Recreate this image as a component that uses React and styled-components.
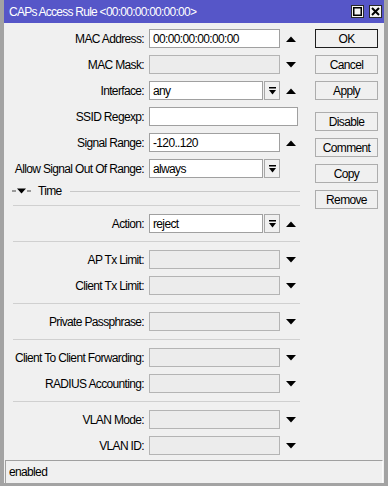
import styled, { createGlobalStyle } from 'styled-components';

const GlobalStyle = createGlobalStyle`
  html, body {
    margin: 0;
    padding: 0;
    background: #f0f0f0;
  }
  body {
    font-family: "Liberation Sans", Arial, sans-serif;
    font-size: 12px;
    letter-spacing: -0.65px;
    color: #000;
  }
`;

const Window = styled.div`
  width: 388px;
  height: 486px;
  box-sizing: border-box;
  display: flex;
  flex-direction: column;
  background: #f0f0f0;
  border-left: 4px solid #a3a3a3;
  border-right: 4px solid #a3a3a3;
  border-bottom: 3px solid #a3a3a3;
`;

const TitleBar = styled.div`
  height: 23px;
  flex-shrink: 0;
  display: flex;
  align-items: center;
  justify-content: space-between;
  padding: 0 2px 0 5px;
  background: #5656c8;
  color: #fff;
  letter-spacing: -0.75px;
`;

const TitleButtons = styled.div`
  display: flex;
  gap: 5px;
`;

const TitleButton = styled.div`
  width: 13px;
  height: 13px;
  box-sizing: border-box;
  display: flex;
  align-items: center;
  justify-content: center;
  background: #f4f4f4;
  border: 1px solid #2a2a2a;
`;

const Body = styled.div`
  display: flex;
  padding-top: 6px;
`;

const Form = styled.div`
  width: 296px;
  display: flex;
  flex-direction: column;
  gap: 7px;
`;

const Row = styled.div`
  display: flex;
  align-items: center;
  height: 19px;
`;

const Label = styled.div`
  width: 140px;
  text-align: right;
  white-space: nowrap;
  margin-right: 5px;
`;

const FieldGroup = styled.div`
  display: flex;
  width: ${(p) => (p.$wide ? '149px' : '131px')};
  height: 19px;
  gap: 1px;
`;

const Field = styled.div`
  flex: 1;
  box-sizing: border-box;
  height: 19px;
  padding: 0 3px;
  display: flex;
  align-items: center;
  background: ${(p) => (p.$disabled ? '#ececec' : '#fff')};
  border: 1px solid ${(p) => (p.$disabled ? '#b4b4b4' : '#a0a0a0')};
  white-space: nowrap;
`;

const DropButton = styled.div`
  width: 16px;
  box-sizing: border-box;
  height: 19px;
  display: flex;
  align-items: center;
  justify-content: center;
  background: #f0f0f0;
  border: 1px solid #a8a8a8;
`;

const ArrowCell = styled.div`
  width: 20px;
  display: flex;
  align-items: center;
  justify-content: center;
  padding-left: 2px;
  box-sizing: border-box;
`;

const TimeRow = styled.div`
  display: flex;
  align-items: center;
  height: 12px;
  padding-left: 8px;
  gap: 6px;
`;

const TimeLine = styled.div`
  flex: 1;
  height: 1px;
  background: #c8c8c8;
  margin-left: 2px;
`;

const Separator = styled.div`
  height: 1px;
  margin: 1px 0 1px 9px;
  background: #d0d0d0;
`;

const Buttons = styled.div`
  width: 63px;
  margin-left: 15px;
  display: flex;
  flex-direction: column;
  gap: 7px;
`;

const Button = styled.div`
  height: 19px;
  box-sizing: border-box;
  display: flex;
  align-items: center;
  justify-content: center;
  background: #f0f0f0;
  border: 1px solid ${(p) => (p.$default ? '#1e1e1e' : '#adadad')};
  margin-top: ${(p) => (p.$groupStart ? '5px' : '0')};
`;

const StatusBar = styled.div`
  margin: auto 1px 0 1px;
  height: 23px;
  box-sizing: border-box;
  display: flex;
  align-items: center;
  padding-left: 3px;
  border-top: 1px solid #a0a0a0;
  border-left: 1px solid #a0a0a0;
  border-right: 1px solid #fafafa;
`;

function UpArrow() {
  return (
    <svg width="10" height="6" viewBox="0 0 10 6">
      <polygon points="0,6 10,6 5,0.5" fill="#000" />
    </svg>
  );
}

function DownArrow() {
  return (
    <svg width="10" height="6" viewBox="0 0 10 6">
      <polygon points="0,0 10,0 5,5.5" fill="#000" />
    </svg>
  );
}

function DropIcon() {
  return (
    <svg width="7" height="8" viewBox="0 0 7 8">
      <rect x="0" y="0" width="7" height="1.5" fill="#000" />
      <polygon points="0,3 7,3 3.5,7.5" fill="#000" />
    </svg>
  );
}

function CollapseIcon() {
  return (
    <svg width="20" height="8" viewBox="0 0 20 8">
      <rect x="0" y="3.5" width="4" height="1" fill="#444" />
      <polygon points="5,1.5 14,1.5 9.5,6.5" fill="#000" />
      <rect x="15" y="3.5" width="4" height="1" fill="#444" />
    </svg>
  );
}

function FormRow({ label, value = '', disabled, drop, arrow, wide }) {
  return (
    <Row>
      <Label>{label}:</Label>
      <FieldGroup $wide={wide}>
        <Field $disabled={disabled}>{value}</Field>
        {drop && (
          <DropButton>
            <DropIcon />
          </DropButton>
        )}
      </FieldGroup>
      {!wide && (
        <ArrowCell>
          {arrow === 'up' && <UpArrow />}
          {arrow === 'down' && <DownArrow />}
        </ArrowCell>
      )}
    </Row>
  );
}

export default function App() {
  return (
    <>
      <GlobalStyle />
      <Window>
        <TitleBar>
          <span>CAPs Access Rule &lt;00:00:00:00:00:00&gt;</span>
          <TitleButtons>
            <TitleButton>
              <svg width="9" height="9" viewBox="0 0 9 9">
                <rect x="0.75" y="0.75" width="7.5" height="7.5" fill="none" stroke="#000" strokeWidth="1.5" />
              </svg>
            </TitleButton>
            <TitleButton>
              <svg width="9" height="9" viewBox="0 0 9 9">
                <path d="M1 1 L8 8 M8 1 L1 8" stroke="#000" strokeWidth="2" />
              </svg>
            </TitleButton>
          </TitleButtons>
        </TitleBar>
        <Body>
          <Form>
            <FormRow label="MAC Address" value="00:00:00:00:00:00" arrow="up" />
            <FormRow label="MAC Mask" disabled arrow="down" />
            <FormRow label="Interface" value="any" drop arrow="up" />
            <FormRow label="SSID Regexp" wide />
            <FormRow label="Signal Range" value="-120..120" arrow="up" />
            <FormRow label="Allow Signal Out Of Range" value="always" drop />
            <TimeRow>
              <CollapseIcon />
              <span>Time</span>
              <TimeLine />
            </TimeRow>
            <Separator />
            <FormRow label="Action" value="reject" drop arrow="up" />
            <Separator />
            <FormRow label="AP Tx Limit" disabled arrow="down" />
            <FormRow label="Client Tx Limit" disabled arrow="down" />
            <Separator />
            <FormRow label="Private Passphrase" disabled arrow="down" />
            <Separator />
            <FormRow label="Client To Client Forwarding" disabled arrow="down" />
            <FormRow label="RADIUS Accounting" disabled arrow="down" />
            <Separator />
            <FormRow label="VLAN Mode" disabled arrow="down" />
            <FormRow label="VLAN ID" disabled arrow="down" />
          </Form>
          <Buttons>
            <Button $default>OK</Button>
            <Button>Cancel</Button>
            <Button>Apply</Button>
            <Button $groupStart>Disable</Button>
            <Button>Comment</Button>
            <Button>Copy</Button>
            <Button>Remove</Button>
          </Buttons>
        </Body>
        <StatusBar>enabled</StatusBar>
      </Window>
    </>
  );
}
